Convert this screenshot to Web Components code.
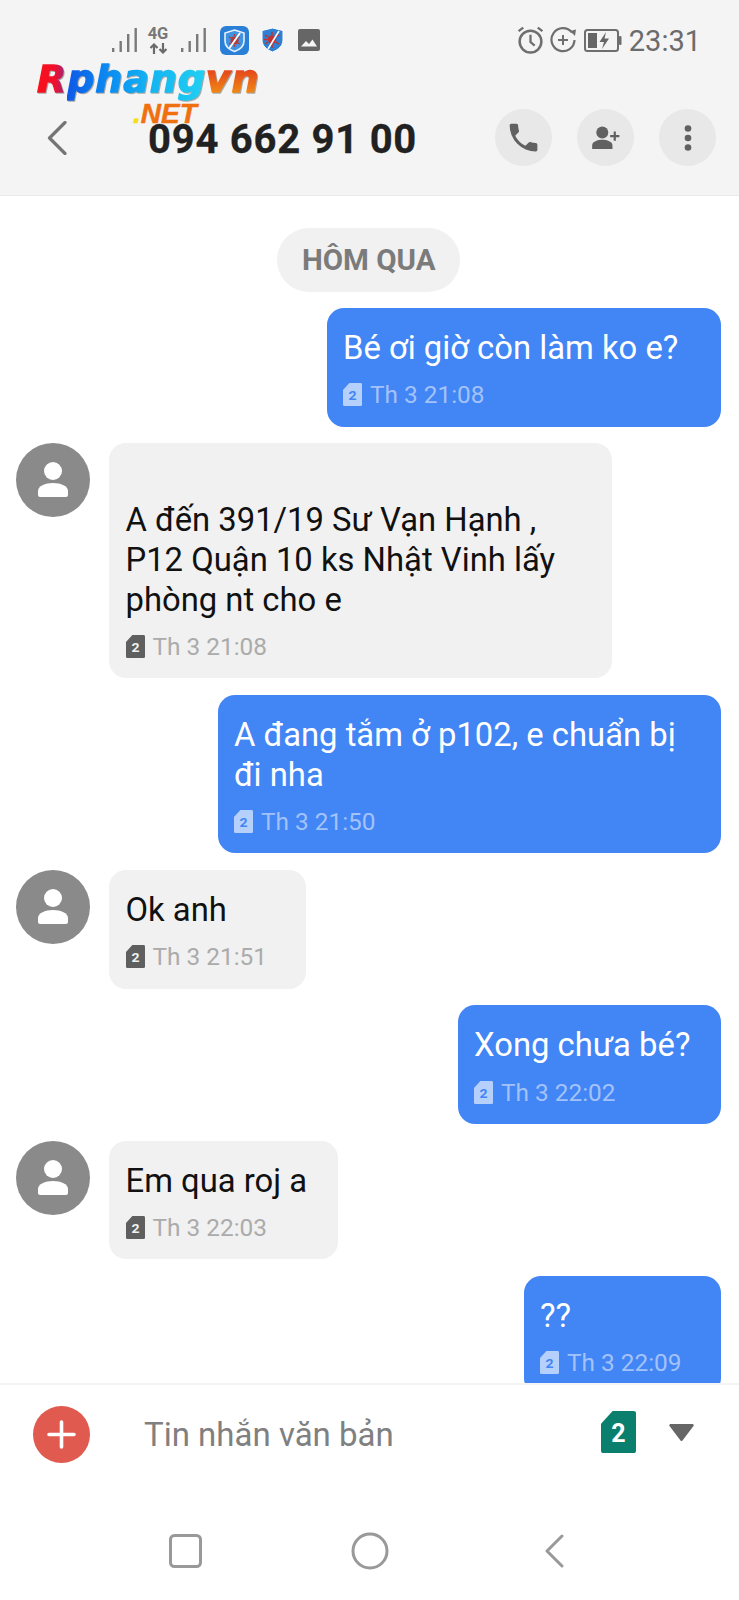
<!DOCTYPE html>
<html>
<head>
<meta charset="utf-8">
<title>Tin nhắn</title>
<style>
html, body { margin: 0; padding: 0; background: #fff; }
body { font-family: Roboto, "Noto Sans", sans-serif; width: 739px; height: 1600px; overflow: hidden; }
</style>
</head>
<body>
<sms-screen>
  <sms-header slot="header"></sms-header>
  <sms-day slot="messages">HÔM QUA</sms-day>
  <sms-bubble slot="messages" mine width="394" time="Th 3 21:08">Bé ơi giờ còn làm ko e?</sms-bubble>
  <sms-bubble slot="messages" width="503" time="Th 3 21:08" lead>A đến 391/19 Sư Vạn Hạnh ,<br>P12 Quận 10 ks Nhật Vinh lấy<br>phòng nt cho e</sms-bubble>
  <sms-bubble slot="messages" mine width="503" time="Th 3 21:50">A đang tắm ở p102, e chuẩn bị<br>đi nha</sms-bubble>
  <sms-bubble slot="messages" width="197" time="Th 3 21:51">Ok anh</sms-bubble>
  <sms-bubble slot="messages" mine width="263" time="Th 3 22:02">Xong chưa bé?</sms-bubble>
  <sms-bubble slot="messages" width="229" time="Th 3 22:03">Em qua roj a</sms-bubble>
  <sms-bubble slot="messages" mine width="197" time="Th 3 22:09">??</sms-bubble>
  <sms-composer slot="composer"></sms-composer>
  <sms-navbar slot="navbar"></sms-navbar>
</sms-screen>

<script>
// small helper, every element gets the same open shadow root setup
function shadow(el, html) {
  el.attachShadow({ mode: 'open' });
  el.shadowRoot.innerHTML = html;
}

const simPath = 'M4.500 0H12.500a1 1 0 0 1 1 1V17a1 1 0 0 1-1 1H1a1 1 0 0 1-1-1V5.500Z';

const signalBars = (style) => `<svg width="25" height="24" viewBox="0 0 25 24" style="${style}"><g fill="#7a7a7a"><rect x="0" y="20" width="2.400" height="4"/><rect x="7.500" y="13" width="2.400" height="11"/><rect x="15" y="6" width="2.400" height="18"/><rect x="22.500" y="0" width="2.400" height="24"/></g></svg>`;

class SmsScreen extends HTMLElement {
  constructor() {
    super();
    shadow(this, `
<style>
:host { display: flex; flex-direction: column; width: 739px; height: 1600px; background: #fff; }
.messages {
  height: 1187px;
  overflow: hidden;
  display: flex;
  flex-direction: column;
  gap: 16.600px;
  padding: 32px 18.500px 0 16px;
  box-sizing: border-box;
  flex: none;
}
</style>
<slot name="header"></slot>
<div class="messages"><slot name="messages"></slot></div>
<slot name="composer"></slot>
<slot name="navbar"></slot>`);
  }
}

class SmsHeader extends HTMLElement {
  constructor() {
    super();
    shadow(this, `
<style>
:host { display: block; position: relative; height: 196px; box-sizing: border-box; background: #f4f4f4; border-bottom: 1px solid #ebebeb; flex: none; }
.status { display: flex; align-items: center; height: 28px; padding: 26px 38px 0 112px; }
.status svg { display: block; flex: none; }
.spacer { flex: 1; }
.net { display: flex; flex-direction: column; align-items: center; width: 20px; margin-left: 11px; color: #777; }
.net span { font-size: 16.500px; line-height: 13px; font-weight: 700; white-space: nowrap; }
.net svg { margin-top: 3px; }
.time { font-size: 29px; color: #6b6b6b; margin-left: 7px; line-height: 28px; position: relative; top: 1px; }
.bar { display: flex; align-items: center; height: 57px; margin-top: 55px; padding: 0 23px 0 47px; }
.back { flex: none; }
.title { font-size: 40px; line-height: 30px; font-weight: 700; letter-spacing: .75px; -webkit-text-stroke: .3px #212121; color: #212121; margin-left: 81px; flex: 1; white-space: nowrap; position: relative; top: 2px; }
.round { width: 57px; height: 57px; border-radius: 50%; background: #e8e8e8; display: flex; align-items: center; justify-content: center; margin-left: 25px; flex: none; }
.logo { position: absolute; left: 37px; top: 59px; }
.r { display: block; font: italic 700 38px/40px "DejaVu Sans", sans-serif; letter-spacing: .9px; white-space: nowrap; filter: drop-shadow(1px 1px 0 #a8a8a8); }
.r span { -webkit-background-clip: text; background-clip: text; color: transparent; -webkit-text-stroke: 1.400px transparent; }
.r1 { background-image: linear-gradient(90deg, #fa0f18 0, #f0102c 60%, #8c2a8c 100%); }
.r2 { background-image: linear-gradient(90deg, #0f58e6 0, #0a8cf2 30%, #14b4f2 60%, #20d0f2 100%); }
.r3 { background-image: linear-gradient(180deg, #e23a1c 20%, #f4a012 100%); }
.n { display: block; margin: 4px 0 0 96px; font: italic 700 28px/21px "Liberation Sans", sans-serif; white-space: nowrap; color: #f07010; -webkit-text-stroke: .5px #f07010; }
.n b { color: #f5e010; -webkit-text-stroke: .5px #f5e010; }
</style>
<div class="status">
  ${signalBars('')}
  <div class="net"><span>4G</span><svg width="18" height="11" viewBox="0 0 18 11"><path d="M5 11V2M1.500 5 5 1.500 8.500 5M14 0V9M10.500 6 14 9.500 17.500 6" stroke="#6a6a6a" stroke-width="2.200" fill="none"/></svg></div>
  ${signalBars('margin-left:13px')}
  <svg width="29" height="29" viewBox="0 0 29 29" style="margin-left:14px">
    <rect width="29" height="29" rx="6" fill="#2a80d6"/>
    <path d="M14.500 4 24 7V15C24 20 20 23.500 14.500 25.500 9 23.500 5 20 5 15V7Z" fill="#3f93e2" stroke="#e6f1fb" stroke-width="1.600"/>
    <circle cx="14.500" cy="14.500" r="4" fill="#b23a3a"/><path d="M9 11 11 12M20 11 18 12M9 18 11 17M20 18 18 17M14.500 8V10M14.500 19V21" stroke="#b23a3a" stroke-width="1.300"/>
    <path d="M20 7 9.500 22" stroke="#fff" stroke-width="1.800"/>
  </svg>
  <svg width="23" height="26" viewBox="0 0 23 26" style="margin-left:12px">
    <path d="M11.500 1 22 3.500V13C22 19 17.500 22.500 11.500 25 5.500 22.500 1 19 1 13V3.500Z" fill="#2f7fd2" stroke="#fff" stroke-width="1"/>
    <circle cx="11" cy="12.500" r="4.200" fill="#c4302f"/><path d="M4 8 7 10M18 8 15 10M4 17 7 15M18 17 15 15M11 5V8M11 17V21M3 12.500H6" stroke="#c4302f" stroke-width="1.500"/>
    <path d="M18 4 7 22" stroke="#fff" stroke-width="1.600"/>
  </svg>
  <svg width="22" height="22" viewBox="0 0 22 22" style="margin-left:14px"><path d="M2 0H20a2 2 0 0 1 2 2V20a2 2 0 0 1-2 2H2a2 2 0 0 1-2-2V2a2 2 0 0 1 2-2ZM3 17.500H19L14.500 10.500 11 15 8 12Z" fill="#666" fill-rule="evenodd"/></svg>
  <div class="spacer"></div>
  <svg width="27" height="28" viewBox="0 0 26 27"><circle cx="13" cy="15" r="10.500" fill="none" stroke="#6e6e6e" stroke-width="2.400"/><path d="M13 8.500V15.500L17 19M1.500 5 6 1.500M24.500 5 20 1.500" fill="none" stroke="#6e6e6e" stroke-width="2.200"/></svg>
  <svg width="27" height="26" viewBox="0 0 27 26" style="margin-left:6px"><path d="M22 5.500A11.500 11.500 0 1 0 24.500 13" fill="none" stroke="#6e6e6e" stroke-width="2.200"/><path d="M20 4 26 2.500 25 9Z" fill="#6e6e6e"/><path d="M13 8V18M8 13H18" stroke="#6e6e6e" stroke-width="2"/></svg>
  <svg width="38" height="23" viewBox="0 0 38 23" style="margin-left:7px"><rect x="1" y="1" width="33" height="21" rx="2.500" fill="none" stroke="#6e6e6e" stroke-width="2"/><rect x="35" y="7" width="2.500" height="9" rx="1" fill="#6e6e6e"/><path d="M4 4H13V19H4Z" fill="#666"/><path d="M22 3 15.500 13H20L18 20 25 9.500H20.500Z" fill="#666"/></svg>
  <span class="time">23:31</span>
</div>
<div class="bar">
  <svg class="back" width="20" height="34" viewBox="0 0 20 34"><path d="M18 1.500 2.500 17 18 32.500" fill="none" stroke="#757575" stroke-width="3.200" stroke-linecap="round" stroke-linejoin="round"/></svg>
  <div class="title">094 662 91 00</div>
  <div class="round"><svg width="37" height="37" viewBox="0 0 24 24"><path d="M6.620 10.790a15.150 15.150 0 0 0 6.590 6.590l2.200-2.200a1 1 0 0 1 1.020-.24 11.360 11.360 0 0 0 3.570.57 1 1 0 0 1 1 1V20a1 1 0 0 1-1 1A17 17 0 0 1 3 4a1 1 0 0 1 1-1h3.500a1 1 0 0 1 1 1c0 1.250.2 2.450.57 3.570a1 1 0 0 1-.25 1.020Z" fill="#616161"/></svg></div>
  <div class="round"><svg width="30" height="24" viewBox="0 0 30 26"><circle cx="11" cy="7" r="6.500" fill="#616161"/><path d="M0 25V21C0 17 6 15 11 15S22 17 22 21V25Z" fill="#616161"/><path d="M24.500 6V16M19.500 11H29.500" stroke="#616161" stroke-width="2.400"/></svg></div>
  <div class="round"><svg width="8" height="26" viewBox="0 0 8 26"><circle cx="4" cy="3.500" r="3.300" fill="#616161"/><circle cx="4" cy="13" r="3.300" fill="#616161"/><circle cx="4" cy="22.500" r="3.300" fill="#616161"/></svg></div>
</div>
<div class="logo">
  <span class="r"><span class="r1">R</span><span class="r2">phang</span><span class="r3">vn</span></span>
  <span class="n"><b>.</b>NET</span>
</div>`);
  }
}

class SmsDay extends HTMLElement {
  constructor() {
    super();
    shadow(this, `
<style>
:host { display: block; align-self: center; margin: 0 0 -.600px 1px; flex: none; }
div { background: #f1f1f1; border-radius: 32px; height: 64px; width: 183px; display: flex; align-items: center; justify-content: center; color: #7b7b7b; font-size: 29.500px; font-weight: 700; white-space: nowrap; }
</style>
<div><slot></slot></div>`);
  }
}

class SmsBubble extends HTMLElement {
  constructor() {
    super();
    const mine = this.hasAttribute('mine');
    const simBg = mine ? '#b5d0fb' : '#5f5f5f';
    const simFg = mine ? '#4285f4' : '#f1f1f1';
    shadow(this, `
<style>
:host { display: flex; flex: none; justify-content: ${mine ? 'flex-end' : 'flex-start'}; gap: 19px; }
.avatar { width: 74px; height: 74px; border-radius: 50%; background: #8a8a8a; display: flex; align-items: center; justify-content: center; flex: none; }
.bubble { width: ${this.getAttribute('width')}px; background: ${mine ? '#4285f4' : '#f1f1f1'}; color: ${mine ? '#fff' : '#111'}; border-radius: 17px; padding: 21px 16.500px 14px; box-sizing: border-box; flex: none; }
.lead { height: 37px; }
.text { font-size: 32.800px; line-height: 39.700px; white-space: nowrap; }
.meta { display: flex; align-items: center; gap: 8px; margin-top: 8px; height: 36px; font-size: 24.400px; color: ${mine ? '#a3c2f9' : '#ababab'}; }
.meta svg { display: block; flex: none; }
.meta text { font: 700 10px Roboto, sans-serif; }
</style>
${mine ? '' : '<div class="avatar"><svg width="32" height="36" viewBox="0 0 32 36"><circle cx="16" cy="9" r="9" fill="#fff"/><path d="M1 33V29C1 24 8 21 16 21S31 24 31 29V33A2 2 0 0 1 29 35H3A2 2 0 0 1 1 33Z" fill="#fff"/></svg></div>'}
<div class="bubble">
  ${this.hasAttribute('lead') ? '<div class="lead"></div>' : ''}
  <div class="text"><slot></slot></div>
  <div class="meta">
    <svg width="19" height="23" viewBox="0 0 13.500 18" preserveAspectRatio="none"><path d="${simPath}" fill="${simBg}"/><text x="6.800" y="13.500" text-anchor="middle" fill="${simFg}">2</text></svg>
    <span>${this.getAttribute('time')}</span>
  </div>
</div>`);
  }
}

class SmsComposer extends HTMLElement {
  constructor() {
    super();
    shadow(this, `
<style>
:host { display: flex; align-items: flex-start; height: 120px; box-sizing: border-box; border-top: 2px solid #f4f4f4; padding: 21px 45px 0 33px; flex: none; }
.plus { width: 57px; height: 57px; border-radius: 50%; background: #e05a50; display: flex; align-items: center; justify-content: center; flex: none; }
.hint { font-size: 33px; color: #808080; margin-left: 54px; flex: 1; line-height: 58px; white-space: nowrap; }
.sim { position: relative; width: 35px; height: 42px; margin-top: 5px; flex: none; }
.sim svg { display: block; }
.sim span { position: absolute; inset: 0; display: flex; align-items: center; justify-content: center; color: #fff; font-size: 25px; font-weight: 700; padding-top: 2px; }
.arrow { margin: 18px 0 0 33px; flex: none; display: block; }
</style>
<div class="plus"><svg width="29" height="29" viewBox="0 0 29 29"><path d="M14.500 2V27M2 14.500H27" stroke="#fff" stroke-width="3.600" stroke-linecap="round"/></svg></div>
<div class="hint">Tin nhắn văn bản</div>
<div class="sim"><svg width="35" height="42" viewBox="0 0 13.500 18" preserveAspectRatio="none"><path d="${simPath}" fill="#0b7f6e"/></svg><span>2</span></div>
<svg class="arrow" width="25" height="17" viewBox="0 0 25 17"><path d="M1.500 0H23.500a1.200 1.200 0 0 1 1 1.900L13.500 16.400a1.200 1.200 0 0 1-2 0L.5 1.900A1.200 1.200 0 0 1 1.500 0Z" fill="#666"/></svg>`);
  }
}

class SmsNavbar extends HTMLElement {
  constructor() {
    super();
    shadow(this, `
<style>
:host { display: flex; align-items: center; height: 97px; padding: 0 0 2px 169px; box-sizing: border-box; flex: none; }
svg { display: block; flex: none; }
</style>
<svg width="33" height="34" viewBox="0 0 33 34"><rect x="1.500" y="1.500" width="30" height="31" rx="4" fill="none" stroke="#999" stroke-width="3"/></svg>
<svg width="38" height="38" viewBox="0 0 38 38" style="margin-left:149px"><circle cx="19" cy="19" r="17" fill="none" stroke="#999" stroke-width="3"/></svg>
<svg width="20" height="34" viewBox="0 0 20 34" style="margin-left:155px"><path d="M18 2 3 17 18 32" fill="none" stroke="#999" stroke-width="3" stroke-linecap="round" stroke-linejoin="round"/></svg>`);
  }
}

customElements.define('sms-screen', SmsScreen);
customElements.define('sms-header', SmsHeader);
customElements.define('sms-day', SmsDay);
customElements.define('sms-bubble', SmsBubble);
customElements.define('sms-composer', SmsComposer);
customElements.define('sms-navbar', SmsNavbar);
</script>
</body>
</html>
